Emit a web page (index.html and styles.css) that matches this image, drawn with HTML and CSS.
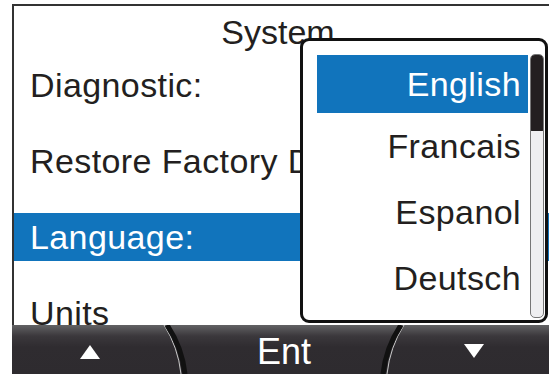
FILE: index.html
```html
<!DOCTYPE html>
<html lang="en">
<head>
    <meta charset="UTF-8">
    <meta name="viewport" content="width=device-width, initial-scale=1.0">
    <title>System</title>
    <link rel="stylesheet" href="styles.css">
</head>
<body>
    <div class="screen">
        <div class="content">
            <div class="title">System</div>
            <ul class="menu">
                <li>Diagnostic:</li>
                <li>Restore Factory Defaults:</li>
                <li class="active">Language:</li>
                <li>Units</li>
            </ul>
        </div>

        <div class="softkeys">
            <div class="key key-up">
                <svg width="20" height="14" viewBox="0 0 20 14"><polygon points="10,0 20,14 0,14" fill="#fff"/></svg>
            </div>
            <svg class="divider" width="32" height="49" viewBox="0 0 32 49">
                <path d="M4 0 Q18 22 21 49" fill="none" stroke="#c9c9c9" stroke-width="1"/>
                <path d="M7 0 Q22 22 25 49" fill="none" stroke="#111" stroke-width="5"/>
            </svg>
            <div class="key key-ent">Ent</div>
            <svg class="divider" width="32" height="49" viewBox="0 0 32 49">
                <path d="M28 0 Q14 22 11 49" fill="none" stroke="#c9c9c9" stroke-width="1"/>
                <path d="M25 0 Q10 22 7 49" fill="none" stroke="#111" stroke-width="5"/>
            </svg>
            <div class="key key-down">
                <svg width="20" height="14" viewBox="0 0 20 14"><polygon points="0,0 20,0 10,14" fill="#fff"/></svg>
            </div>
        </div>
    </div>

    <div class="popup">
        <ul class="options">
            <li class="selected">English</li>
            <li>Francais</li>
            <li>Espanol</li>
            <li>Deutsch</li>
        </ul>
        <div class="scrollbar">
            <div class="thumb"></div>
        </div>
    </div>
</body>
</html>
```

FILE: styles.css
```css
body {
    font-family: "Liberation Sans", Arial, sans-serif;
    background: #fff;
    margin: 0;
    width: 549px;
    height: 374px;
    overflow: hidden;
    position: relative;
    color: #231f20;
}

.screen {
    margin: 4px 0 0 12px;
    width: 537px;
    height: 370px;
    border-top: 2px solid #333;
    border-left: 2px solid #333;
    box-sizing: border-box;
    display: flex;
    flex-direction: column;
}

.content {
    height: 319px;
    overflow: hidden;
}

.title {
    font-size: 34px;
    line-height: 38px;
    text-align: center;
    padding: 7px 7px 0 0;
}

.menu {
    list-style: none;
    margin: 10px 0 0 0;
    padding: 0;
    display: flex;
    flex-direction: column;
    gap: 28px;
}

.menu li {
    height: 48px;
    line-height: 48px;
    font-size: 34px;
    letter-spacing: 0.4px;
    padding-left: 16px;
    white-space: nowrap;
}

.menu li.active {
    background: #1174bc;
    color: #fff;
    margin-left: -2px;
    padding-left: 18px;
}

.softkeys {
    height: 49px;
    margin-left: -2px;
    display: flex;
    background: linear-gradient(#626264 0, #3b383c 11px, #2f2c30 22px, #2e2b2f 100%);
}

.key {
    display: flex;
    align-items: center;
    justify-content: center;
    color: #fff;
}

.key-up {
    width: 148px;
    padding-left: 7px;
    box-sizing: border-box;
    padding-top: 5px;
}

.key-ent {
    width: 184px;
    font-size: 36px;
    padding-top: 4px;
}

.key-down {
    flex: 1;
    padding-right: 10px;
    padding-top: 2px;
}

.divider {
    display: block;
    flex-shrink: 0;
}

.popup {
    position: absolute;
    left: 300px;
    top: 38px;
    width: 248px;
    height: 285px;
    box-sizing: border-box;
    border: 3px solid #111;
    border-radius: 9px;
    background: #fff;
    display: flex;
    gap: 2px;
    padding: 13px 1px 2px 14px;
}

.options {
    list-style: none;
    margin: 1px 0 0 0;
    padding: 0;
    width: 211px;
}

.options li {
    height: 66px;
    line-height: 66px;
    font-size: 34px;
    letter-spacing: 0.4px;
    text-align: right;
    padding-right: 7px;
}

.options li.selected {
    height: 58px;
    line-height: 58px;
    background: #1174bc;
    color: #fff;
}

.scrollbar {
    width: 14px;
    box-sizing: border-box;
    border: 1px solid #777;
    border-radius: 5px;
    background: #efeff1;
    position: relative;
    overflow: hidden;
}

.thumb {
    height: 77px;
    margin: -1px;
    background: #231f20;
    border-radius: 5px 5px 2px 2px;
}
```
